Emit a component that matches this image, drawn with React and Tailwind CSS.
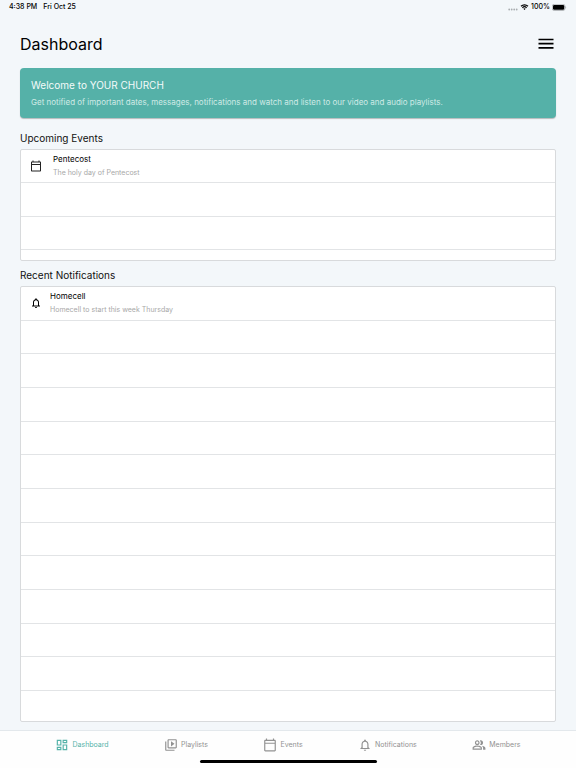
import React from "react";
import {
  MdOutlineDashboard,
  MdOutlineVideoLibrary,
  MdOutlineCalendarToday,
  MdNotificationsNone,
  MdOutlinePeopleAlt,
} from "react-icons/md";

function StatusBar() {
  return (
    <div className="flex h-[14px] items-center justify-between px-[9px] text-[7px] font-medium text-black">
      <div className="flex gap-[6px]">
        <span>4:38 PM</span>
        <span>Fri Oct 25</span>
      </div>
      <div className="flex items-center gap-[2px]">
        <svg className="mt-[4px] h-[3px] w-[10px]" viewBox="0 0 10 3" fill="#a9adb0">
          <circle cx="1.2" cy="1.5" r="0.9" />
          <circle cx="3.7" cy="1.5" r="0.9" />
          <circle cx="6.2" cy="1.5" r="0.9" />
          <circle cx="8.7" cy="1.5" r="0.9" />
        </svg>
        <svg className="h-[6px] w-[9px]" viewBox="0 0 16 12" fill="none" stroke="#000" strokeWidth="2.4">
          <path d="M1 4.6a10 10 0 0 1 14 0" />
          <path d="M3.8 7.5a6 6 0 0 1 8.4 0" />
          <path d="M8 12L5.6 9.5a3.4 3.4 0 0 1 4.8 0z" fill="#000" stroke="none" />
        </svg>
        <span>100%</span>
        <svg className="h-[7px] w-[15px]" viewBox="0 0 15 7">
          <rect x="0.3" y="0.3" width="12.6" height="6.2" rx="1.8" fill="none" stroke="#8d9194" strokeWidth="0.6" />
          <rect x="1" y="1" width="11.2" height="4.8" rx="1.2" fill="#000" />
          <path d="M13.5 2.3a1.3 1.3 0 0 1 0 2.2z" fill="#8d9194" />
        </svg>
      </div>
    </div>
  );
}

function ItemRow({ icon, title, detail, gap }) {
  return (
    <li className={`flex grow basis-0 items-center border-b border-[#e2e4e6] pl-[9px] ${gap}`}>
      {icon}
      <div className="pb-px">
        <p className="text-[8px] leading-[13px] text-black">{title}</p>
        <p className="text-[7px] leading-[13px] text-[#a8a8a8]">{detail}</p>
      </div>
    </li>
  );
}

function EmptyRows({ count }) {
  return Array.from({ length: count }, (_, i) => (
    <li key={i} className="grow basis-0 border-b border-[#e2e4e6]" />
  ));
}

const tabs = [
  { label: "Dashboard", Icon: MdOutlineDashboard, color: "text-[#55b3a9]" },
  { label: "Playlists", Icon: MdOutlineVideoLibrary, color: "text-[#929292]" },
  { label: "Events", Icon: MdOutlineCalendarToday, color: "text-[#929292]" },
  { label: "Notifications", Icon: MdNotificationsNone, color: "text-[#929292]" },
  { label: "Members", Icon: MdOutlinePeopleAlt, color: "text-[#929292]" },
];

export default function App() {
  return (
    <div className="flex min-h-screen flex-col bg-[#f3f7fa] font-['Inter','Liberation_Sans',sans-serif]">
      <StatusBar />
      <main className="flex flex-1 flex-col px-5 pb-2">
        <header className="flex h-[54px] items-center justify-between pt-[6px]">
          <h1 className="text-[16px] leading-5 text-black">Dashboard</h1>
          <button type="button" aria-label="Open menu" className="mr-[2px] pb-px">
            <svg className="block h-3 w-4" viewBox="0 0 16 12" stroke="#000" strokeWidth="1.7">
              <path d="M0.5 1.5h15M0.5 5.7h15M0.5 9.9h15" />
            </svg>
          </button>
        </header>

        <section className="flex h-[50px] flex-col justify-center rounded-[4px] bg-[#55b1a8] px-[11px] shadow-[0_1px_1px_rgba(0,0,0,0.25)]">
          <h2 className="text-[10px] leading-[18px] text-[#f4fbfa]">Welcome to YOUR CHURCH</h2>
          <p className="text-[8px] leading-4 text-[#cfeae6]">
            Get notified of important dates, messages, notifications and watch and listen to our video and audio
            playlists.
          </p>
        </section>

        <h2 className="mt-[12px] mb-[3px] text-[10px] leading-4 text-[#111]">Upcoming Events</h2>
        <ul className="flex h-[112px] flex-col rounded-[2px] border border-[#d8dadc] bg-white">
          <ItemRow
            icon={<MdOutlineCalendarToday className="size-3 text-[#222]" />}
            title="Pentecost"
            detail="The holy day of Pentecost"
            gap="gap-[11px]"
          />
          <EmptyRows count={2} />
          <li className="h-[10px]" />
        </ul>

        <h2 className="mt-[6px] mb-[3px] text-[10px] leading-4 text-[#111]">Recent Notifications</h2>
        <ul className="flex flex-1 flex-col rounded-[2px] border border-[#d8dadc] bg-white">
          <ItemRow
            icon={<MdNotificationsNone className="size-3 text-black" />}
            title="Homecell"
            detail="Homecell to start this week Thursday"
            gap="gap-[8px]"
          />
          <EmptyRows count={11} />
          <li className="h-[30px]" />
        </ul>
      </main>

      <footer className="flex h-[38px] flex-col items-center border-t border-[#e3e8ec] bg-[#fefefe]">
        <nav className="mb-px flex h-[28px] w-full items-center justify-evenly">
          {tabs.map(({ label, Icon, color }) => (
            <a key={label} href="#" className={`flex items-center gap-[3px] text-[7px] ${color}`}>
              <Icon className="size-[14px]" />
              <span className="pt-px">{label}</span>
            </a>
          ))}
        </nav>
        <div className="h-[3px] w-[177px] rounded-full bg-black" />
      </footer>
    </div>
  );
}
